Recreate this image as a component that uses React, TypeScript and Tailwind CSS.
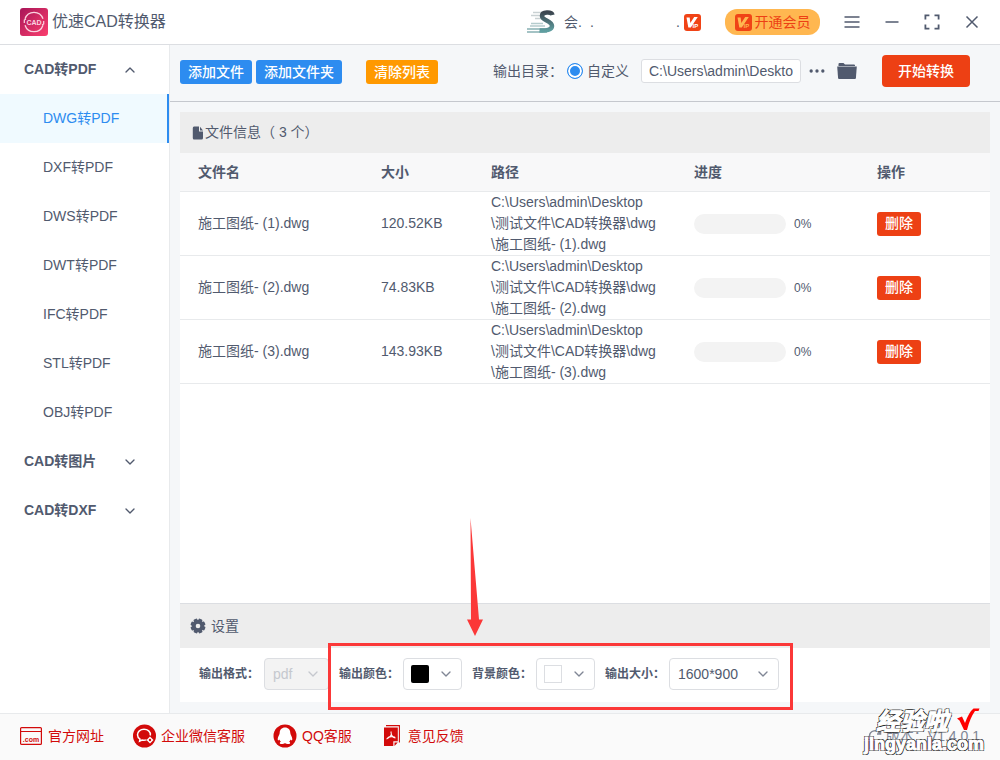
import React, { useState } from 'react';
import { ChevronDown, ChevronUp, Ellipsis } from 'lucide-react';

interface CadFile {
  id: number;
  name: string;
  size: string;
  path: string[];
  progress: number;
}

const initialFiles: CadFile[] = [
  { id: 1, name: '施工图纸- (1).dwg', size: '120.52KB', progress: 0, path: ['C:\\Users\\admin\\Desktop', '\\测试文件\\CAD转换器\\dwg', '\\施工图纸- (1).dwg'] },
  { id: 2, name: '施工图纸- (2).dwg', size: '74.83KB', progress: 0, path: ['C:\\Users\\admin\\Desktop', '\\测试文件\\CAD转换器\\dwg', '\\施工图纸- (2).dwg'] },
  { id: 3, name: '施工图纸- (3).dwg', size: '143.93KB', progress: 0, path: ['C:\\Users\\admin\\Desktop', '\\测试文件\\CAD转换器\\dwg', '\\施工图纸- (3).dwg'] },
];

const menuGroups = [
  { title: 'CAD转PDF', items: ['DWG转PDF', 'DXF转PDF', 'DWS转PDF', 'DWT转PDF', 'IFC转PDF', 'STL转PDF', 'OBJ转PDF'] },
  { title: 'CAD转图片', items: [] },
  { title: 'CAD转DXF', items: [] },
];

function AppLogo() {
  return (
    <svg width="28" height="28" viewBox="0 0 28 28" className="shrink-0">
      <defs>
        <linearGradient id="logo-bg" x1="0" y1="0" x2="1" y2="1">
          <stop offset="0" stopColor="#a81558" />
          <stop offset="1" stopColor="#fb3f6e" />
        </linearGradient>
      </defs>
      <rect width="28" height="28" rx="3" fill="url(#logo-bg)" />
      <path d="M5 10.800A9.500 9.500 0 0 1 23 10.800M23 17.200A9.500 9.500 0 0 1 5 17.200" fill="none" stroke="#fbd3e0" strokeWidth="1.300" />
      <path d="M4.300 15v-3l1.700-1M23.700 13v3l-1.700 1" fill="none" stroke="#fbd3e0" strokeWidth="1.200" />
      <text x="14" y="16.600" textAnchor="middle" fontSize="7" fontWeight="bold" fill="#fbd3e0" fontFamily="Liberation Sans, sans-serif">CAD</text>
    </svg>
  );
}

function AvatarMark() {
  return (
    <svg width="29" height="24" viewBox="0 0 29 24" className="shrink-0">
      <defs>
        <linearGradient id="avatar-s" x1="0" y1="0" x2="0" y2="1">
          <stop offset="0" stopColor="#3c4650" />
          <stop offset="1" stopColor="#5f9ea0" />
        </linearGradient>
      </defs>
      <g strokeWidth="1.5">
        <path d="M7 2.500h12M5 5.500h12M9 8.500h8" stroke="#c9d1d3" />
        <path d="M5 13.500h12M4 16h15" stroke="#b5cccd" />
        <path d="M1 19h19M1 22h20" stroke="#86b0b2" />
      </g>
      <path d="M26.500 5C25.500 1.500 16 1.500 16 6c0 4.500 10 4.500 10 10 0 4-6 5-12.500 4.500" fill="none" stroke="url(#avatar-s)" strokeWidth="4.500" />
    </svg>
  );
}

function VipBadge({ tone }: { tone: string }) {
  return (
    <svg width="17" height="17" viewBox="0 0 17 17" className="shrink-0">
      <rect width="17" height="17" rx="3" fill="#f04316" />
      <path d="M2.500 3.500h3.200l.6 5.500 3.900-6h3.600L6.800 13.500H4.300z" fill={tone} />
      <text x="8.500" y="14" fontSize="6" fontWeight="bold" fill={tone} fontFamily="Liberation Sans, sans-serif">IP</text>
    </svg>
  );
}

function Header() {
  return (
    <header className="flex h-[45px] shrink-0 items-center justify-between border-b border-[#dcdee2] bg-white pl-5 pr-2">
      <div className="flex items-center gap-1">
        <AppLogo />
        <h1 className="text-base text-[#515a6e]">优速CAD转换器</h1>
      </div>
      <div className="flex items-center">
        <AvatarMark />
        <div className="ml-[9px] flex w-[120px] items-center">
          <span>会.</span>
          <span className="ml-2">.</span>
          <span className="ml-auto mr-1">.</span>
        </div>
        <VipBadge tone="#ffffff" />
        <button className="ml-6 mr-3 flex h-[26px] w-[95px] items-center justify-center gap-[3px] rounded-xl bg-[#ffb750] text-[#ed4014]">
          <VipBadge tone="#ffb750" />
          开通会员
        </button>
        <button aria-label="菜单" className="flex w-10 justify-center">
          <svg width="16" height="16" viewBox="0 0 16 16" stroke="#515a6e" strokeWidth="1.500"><path d="M.5 3h15M.5 8h15M.5 13h15" /></svg>
        </button>
        <button aria-label="最小化" className="flex w-10 justify-center">
          <svg width="16" height="16" viewBox="0 0 16 16" stroke="#515a6e" strokeWidth="1.500"><path d="M1.500 8h13" /></svg>
        </button>
        <button aria-label="最大化" className="flex w-10 justify-center">
          <svg width="16" height="16" viewBox="0 0 16 16" fill="none" stroke="#515a6e" strokeWidth="1.800"><path d="M1.400 5.500V1.400h4M10.500 1.400h4.100v4.100M14.600 10.500v4.100h-4.100M5.400 14.600h-4v-4.100" /></svg>
        </button>
        <button aria-label="关闭" className="flex w-10 justify-center">
          <svg width="16" height="16" viewBox="0 0 16 16" stroke="#515a6e" strokeWidth="1.500"><path d="M2.500 2.500l11 11M13.500 2.500l-11 11" /></svg>
        </button>
      </div>
    </header>
  );
}

function Sidebar() {
  const [active, setActive] = useState('DWG转PDF');

  return (
    <nav className="w-[170px] shrink-0 border-r border-[#e8eaec] bg-white">
      {menuGroups.map((group) => (
        <div key={group.title}>
          <button className="flex h-[49px] w-full items-center justify-between pl-6 pr-[31px] font-bold">
            {group.title}
            {group.items.length > 0 ? <ChevronUp size={16} strokeWidth={2} /> : <ChevronDown size={16} strokeWidth={2} />}
          </button>
          {group.items.map((item) => (
            <button
              key={item}
              onClick={() => setActive(item)}
              className={
                item === active
                  ? 'flex h-[49px] w-full items-center border-r-2 border-[#2d8cf0] bg-[#f0faff] pl-[43px] text-[#2d8cf0]'
                  : 'flex h-[49px] w-full items-center pl-[43px]'
              }
            >
              {item}
            </button>
          ))}
        </div>
      ))}
    </nav>
  );
}

function Toolbar({ onClear }: { onClear: () => void }) {
  return (
    <div className="flex h-[57px] shrink-0 items-center justify-between border-b border-[#c5c8ce] pb-1 pl-[10px] pr-[30px]">
      <div className="flex gap-1 pt-[2px]">
        <button className="h-6 rounded-[3px] bg-[#2d8cf0] px-2 font-medium text-white">添加文件</button>
        <button className="h-6 rounded-[3px] bg-[#2d8cf0] px-2 font-medium text-white">添加文件夹</button>
        <button onClick={onClear} className="ml-5 h-6 rounded-[3px] bg-[#ff9900] px-2 font-medium text-white">清除列表</button>
      </div>
      <div className="flex items-center">
        <span className="w-[74px]">输出目录：</span>
        <label className="flex items-center gap-1">
          <input
            type="radio"
            name="output-dir"
            defaultChecked
            className="size-4 appearance-none rounded-full border border-[#2d8cf0] bg-white checked:bg-[#2d8cf0] checked:shadow-[inset_0_0_0_2px_white]"
          />
          自定义
        </label>
        <input
          type="text"
          aria-label="输出目录"
          defaultValue="C:\Users\admin\Desktop"
          className="ml-3 h-6 w-40 rounded-[3px] border border-[#dcdee2] bg-white px-[7px]"
        />
        <button aria-label="更多" className="ml-[6px]"><Ellipsis size={20} strokeWidth={2} /></button>
        <button aria-label="打开文件夹" className="ml-[10px]">
          <svg width="20" height="18" viewBox="0 0 20 18" fill="#515a6e">
            <path d="M1.500 4V2q0-1 1-1h4L8 2.500h9q1 0 1 1V4z" />
            <path d="M.2 4.500h19.600l-.9 11.700q-.1.800-1 .8H2.100q-.9 0-1-.8z" />
          </svg>
        </button>
        <button className="ml-[25px] h-8 rounded bg-[#ed4014] px-4 font-medium text-white">开始转换</button>
      </div>
    </div>
  );
}

function FileTable({ files, onDelete }: { files: CadFile[]; onDelete: (id: number) => void }) {
  return (
    <table className="w-full table-fixed border-separate border-spacing-0 text-left">
      <thead>
        <tr className="h-[39px] bg-[#f8f8f9]">
          <th className="w-[183px] border-b border-[#e8eaec] px-[18px]">文件名</th>
          <th className="w-[110px] border-b border-[#e8eaec] px-[18px]">大小</th>
          <th className="w-[203px] border-b border-[#e8eaec] px-[18px]">路径</th>
          <th className="w-[183px] border-b border-[#e8eaec] px-[18px]">进度</th>
          <th className="border-b border-[#e8eaec] px-[18px]">操作</th>
        </tr>
      </thead>
      <tbody>
        {files.map((file) => (
          <tr key={file.id} className="h-16">
            <td className="border-b border-[#e8eaec] px-[18px]">{file.name}</td>
            <td className="border-b border-[#e8eaec] px-[18px]">{file.size}</td>
            <td className="whitespace-nowrap border-b border-[#e8eaec] pl-[18px]">
              {file.path.map((part) => (
                <span key={part} className="block">{part}</span>
              ))}
            </td>
            <td className="border-b border-[#e8eaec] px-[18px]">
              <div className="flex items-center gap-2">
                <div className="h-5 w-[92px] overflow-hidden rounded-full bg-[#f3f3f3]">
                  <div className="h-full bg-[#2d8cf0]" style={{ width: `${file.progress}%` }} />
                </div>
                <span className="text-xs">{file.progress}%</span>
              </div>
            </td>
            <td className="border-b border-[#e8eaec] px-[18px]">
              <button onClick={() => onDelete(file.id)} className="block h-6 rounded-[3px] bg-[#ed4014] px-2 font-medium text-white">
                删除
              </button>
            </td>
          </tr>
        ))}
      </tbody>
    </table>
  );
}

function ColorPicker({ id, color }: { id: string; color: 'black' | 'white' }) {
  return (
    <button id={id} aria-haspopup="listbox" className="flex h-8 w-[59px] items-center justify-between rounded border border-[#dcdee2] bg-white pl-[7px] pr-[7px]">
      <span className={color === 'black' ? 'size-[18px] rounded-[2px] bg-black' : 'size-[18px] border border-[#dcdee2] bg-white'} />
      <ChevronDown size={16} strokeWidth={2} className="text-[#808695]" />
    </button>
  );
}

function Settings() {
  return (
    <section>
      <h2 className="flex h-[45px] items-center gap-[5px] border-t border-[#dcdee2] bg-[#ededed] pl-[10px]">
        <svg width="16" height="16" viewBox="0 0 16 16">
          <g fill="#515a6e">
            <circle cx="8" cy="8" r="6" />
            <rect x="6" y="0.500" width="4" height="15" rx="1" transform="rotate(22 8 8)" />
            <rect x="6" y="0.500" width="4" height="15" rx="1" transform="rotate(67 8 8)" />
            <rect x="6" y="0.500" width="4" height="15" rx="1" transform="rotate(112 8 8)" />
            <rect x="6" y="0.500" width="4" height="15" rx="1" transform="rotate(157 8 8)" />
          </g>
          <circle cx="8" cy="8" r="2.300" fill="#ededed" />
        </svg>
        设置
      </h2>
      <div className="relative flex items-center gap-[10px] bg-white pb-3 pl-[19px] pt-[10px]">
        <div className="flex items-center gap-1">
          <label htmlFor="format" className="w-[61px] text-xs font-bold">输出格式：</label>
          <div className="relative">
            <select id="format" disabled className="h-8 w-[65px] appearance-none rounded border border-[#dcdee2] bg-[#f3f3f3] pl-2 text-[#c5c8ce] opacity-100">
              <option>pdf</option>
            </select>
            <ChevronDown size={16} className="pointer-events-none absolute right-2 top-2 text-[#c5c8ce]" />
          </div>
        </div>
        <div className="flex items-center gap-1">
          <label htmlFor="out-color" className="w-[60px] text-xs font-bold">输出颜色：</label>
          <ColorPicker id="out-color" color="black" />
        </div>
        <div className="flex items-center gap-1">
          <label htmlFor="bg-color" className="w-[60px] text-xs font-bold">背景颜色：</label>
          <ColorPicker id="bg-color" color="white" />
        </div>
        <div className="flex items-center gap-1">
          <label htmlFor="size" className="w-[60px] text-xs font-bold">输出大小：</label>
          <div className="relative">
            <select id="size" className="h-8 w-[110px] appearance-none rounded border border-[#dcdee2] bg-white pl-2">
              <option>1600*900</option>
              <option>1920*1080</option>
            </select>
            <ChevronDown size={16} className="pointer-events-none absolute right-2 top-2 text-[#808695]" />
          </div>
        </div>

        {/* Highlight box and arrow */}
        <div className="pointer-events-none absolute -top-[5px] left-[148px] h-[67px] w-[465px] border-[3px] border-[#fb3838]" />
        <svg width="18" height="120" viewBox="0 0 18 120" className="pointer-events-none absolute -top-[131px] left-[286px]">
          <path d="M4.500 1L13 102.500h4L9 119 1 102.500h4z" fill="#fb3838" />
        </svg>
      </div>
    </section>
  );
}

function Footer() {
  return (
    <footer className="relative flex h-[47px] shrink-0 items-center justify-between border-t border-[#e8eaec] bg-[#fafafa] pb-[2px] pl-5 pr-5 text-[#d20a0a]">
      <div className="flex items-center">
        <a href="#site" className="flex items-center gap-[6px]">
          <svg width="22" height="18" viewBox="0 0 22 18">
            <path d="M.6 1.600q0-1 1-1h18.800q1 0 1 1v14.800q0 1-1 1H1.600q-1 0-1-1zM.6 4.500h20.800" fill="none" stroke="#d20a0a" strokeWidth="1.200" />
            <text x="11" y="14.500" textAnchor="middle" fontSize="7" fontWeight="bold" fill="#d20a0a" fontFamily="Liberation Sans, sans-serif">.com</text>
          </svg>
          官方网址
        </a>
        <a href="#wecom" className="ml-[29px] flex items-center gap-[5px]">
          <svg width="23" height="24" viewBox="0 0 23 24">
            <circle cx="11.500" cy="12" r="11.500" fill="#d20a0a" />
            <path
              d="M17.300 11.500C18 7.500 14.500 5.200 11 5.200c-3.800 0-6.500 2.500-6.500 5.500 0 2 1 3.400 2.500 4.400l-.4 2.100 2.400-1.200c1.500.4 3 .3 4.500-.1"
              fill="none"
              stroke="#fff"
              strokeWidth="1.500"
            />
            <path d="M17 12.500l3.500 3.500-3.500 3.500-3.500-3.500z" fill="#fff" />
            <circle cx="17" cy="16" r="1.200" fill="#d20a0a" />
          </svg>
          企业微信客服
        </a>
        <a href="#qq" className="ml-7 flex items-center gap-[5px]">
          <svg width="24" height="24" viewBox="0 0 24 24">
            <circle cx="12" cy="12" r="11.500" fill="#d20a0a" />
            <path d="M12 3.500c-3.300 0-5.300 2.300-5.300 5.500 0 1.500-1.900 3.600-2 6 0 1.800.9 1.700 1.700.4.300 1 .8 1.700 1.500 2.300-1.500.6-1.600 2.300.6 2.300 1.500 0 2.800-.3 3.500-1 .7.700 2 1 3.500 1 2.200 0 2.100-1.700.6-2.300.7-.6 1.200-1.300 1.500-2.300.8 1.300 1.700 1.400 1.700-.4-.1-2.400-2-4.500-2-6 0-3.200-2-5.500-5.300-5.500z" fill="#fff" />
          </svg>
          QQ客服
        </a>
        <a href="#feedback" className="ml-[31px] flex items-center gap-[7px]">
          <svg width="18" height="22" viewBox="0 0 18 22">
            <path d="M3 .6h13.400v17" fill="none" stroke="#d20a0a" strokeWidth="1.100" />
            <path d="M1 2.500h13.800v13.800h-4.500V21H1z" fill="#d20a0a" />
            <path d="M11.500 21v-3.500h3.300z" fill="#d20a0a" />
            <path d="M7.900 6.500c1.200 3-.8 6-4.400 7.500M8 9c.5 2 2 3.400 4.500 4M4.500 12.800c2.500-1.500 5-1.500 7.500-.6" fill="none" stroke="#fff" strokeWidth="1.100" />
          </svg>
          意见反馈
        </a>
      </div>
      <span className="flex items-center gap-1 text-[#808695]">
        <svg width="14" height="14" viewBox="0 0 14 14" fill="none" stroke="#808695" strokeWidth="1.500">
          <path d="M1.500 7A5.500 5.500 0 0 1 12 5M12.500 1.500V5H9" />
        </svg>
        版本：V1.4.0.1
      </span>

      {/* Site watermark */}
      <div className="pointer-events-none absolute -top-2 right-4 flex flex-col items-end font-bold text-white [-webkit-text-stroke:1px_white] [text-shadow:1px_1px_0_#222,-1px_1px_0_#222,1px_-1px_0_#222,-1px_-1px_0_#222]">
        <div className="flex items-start gap-2 pr-1">
          <span className="text-2xl italic leading-8">经验啦</span>
          <svg width="24" height="26" viewBox="0 0 24 26"><path d="M1 12.500l5-2 3 6.500Q13 6 17.500 2.500h6l-1 2.500h-3.500Q14 12 11 24H8L3.500 14.500z" fill="#f00" /></svg>
        </div>
        <span className="text-lg leading-3">jingyanla.com</span>
      </div>
    </footer>
  );
}

export default function App() {
  const [files, setFiles] = useState<CadFile[]>(initialFiles);

  function handleDelete(id: number) {
    setFiles(files.filter((file) => file.id !== id));
  }

  return (
    <div className="flex min-h-screen flex-col overflow-hidden bg-[#f5f7f9] font-['Liberation_Sans','Noto_Sans_CJK_SC',sans-serif] text-sm leading-[21px] text-[#515a6e]">
      <Header />
      <div className="flex flex-1">
        <Sidebar />
        <main className="flex min-w-0 flex-1 flex-col">
          <Toolbar onClear={() => setFiles([])} />
          <div className="flex flex-1 flex-col px-[10px] pb-[11px] pt-[10px]">
            {/* File list */}
            <section className="flex-1 bg-white">
              <h2 className="flex h-[41px] items-center gap-px bg-[#ededed] pl-3">
                <svg width="12" height="14" viewBox="0 0 12 14" fill="#515a6e">
                  <path d="M2 .5h5v5h4V12q0 1.500-1.500 1.500H2Q.8 13.500.8 12V2Q.8.500 2 .500z" />
                  <path d="M8 .8L11 4.500H8z" />
                </svg>
                文件信息（ {files.length} 个）
              </h2>
              <FileTable files={files} onDelete={handleDelete} />
            </section>
            <Settings />
          </div>
        </main>
      </div>
      <Footer />
    </div>
  );
}
